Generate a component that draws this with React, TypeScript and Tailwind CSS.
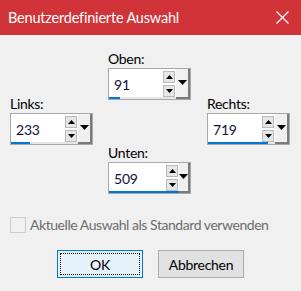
import React from "react";

const font = { fontFamily: 'Lato, "Noto Sans", sans-serif' };

function Tri({ dir, w }: { dir: "up" | "down"; w: number }) {
  const h = Math.ceil(w / 2);
  return (
    <svg width={w} height={h} viewBox={`0 0 ${w} ${h}`}>
      {dir === "up" ? (
        <polygon points={`0,${h} ${w},${h} ${w / 2},0`} fill="#000" />
      ) : (
        <polygon points={`0,0 ${w},0 ${w / 2},${h}`} fill="#000" />
      )}
    </svg>
  );
}

function SpinBox({ value, fill }: { value: string; fill: number }) {
  return (
    <div className="flex h-[32px] w-[83px] border border-[#a8a8a8] bg-white">
      <div className="flex flex-1 flex-col">
        <div className="flex flex-1">
          <div className="flex flex-1 items-center pl-[5px] pt-[2px] text-[14px] tracking-[-0.2px] text-[#101040]">
            {value}
          </div>
          <div className="flex flex-col gap-[2px] pt-[2px] pr-[1px]">
            <div className="flex h-[12px] w-[12px] items-center justify-center border border-[#b9b9b9] bg-[#e6e6e6]">
              <Tri dir="up" w={7} />
            </div>
            <div className="flex h-[12px] w-[12px] items-center justify-center border border-[#b9b9b9] bg-[#e6e6e6]">
              <Tri dir="down" w={7} />
            </div>
          </div>
        </div>
        <div className="h-[3px] bg-[#e6e6e6]">
          <div className="h-full bg-[#0078d7]" style={{ width: fill }} />
        </div>
      </div>
      <div className="flex w-[14px] items-center justify-center border-r-2 border-b-2 border-[#7a7a7a] bg-[#f0f0f0] pb-[2px]">
        <Tri dir="down" w={9} />
      </div>
    </div>
  );
}

function Field({ label, value, fill }: { label: string; value: string; fill: number }) {
  return (
    <div className="flex flex-col">
      <div className="h-[18px] text-[14px] leading-[18px] tracking-[-0.3px] text-black">{label}</div>
      <SpinBox value={value} fill={fill} />
    </div>
  );
}

export default function App() {
  return (
    <div className="flex h-[291px] w-[301px] flex-col bg-[#f0f0f0]" style={font}>
      <div className="flex h-[35px] shrink-0 items-center justify-between bg-[#d13438] pl-[8px] pr-[12px]">
        <span className="text-[14.5px] tracking-[-0.2px] text-white">Benutzerdefinierte Auswahl</span>
        <svg width="13" height="13" viewBox="0 0 13 13">
          <path d="M0.5 0.5 L12.5 12.5 M12.5 0.5 L0.5 12.5" stroke="#fff" strokeWidth="1.2" />
        </svg>
      </div>
      <div className="flex pl-[10px] pt-[15px]">
        <div className="mt-[45px]">
          <Field label="Links:" value="233" fill={19} />
        </div>
        <div className="ml-[15px] flex flex-col gap-[44px]">
          <Field label="Oben:" value="91" fill={11} />
          <Field label="Unten:" value="509" fill={70} />
        </div>
        <div className="ml-[16px] mt-[45px]">
          <Field label="Rechts:" value="719" fill={60} />
        </div>
      </div>
      <div className="mt-[23px] flex h-[16px] items-center pl-[10px]">
        <div className="h-[16px] w-[16px] shrink-0 border border-[#cccccc] bg-[#f0f0f0]" />
        <span className="ml-[4px] whitespace-nowrap text-[14px] leading-[16px] tracking-[-0.45px] text-[#6d6d6d]">
          Aktuelle Auswahl als Standard verwenden
        </span>
      </div>
      <div className="mt-[17px] flex gap-[15px] pl-[57px]">
        <div className="flex h-[28px] w-[86px] items-center justify-center border border-[#0078d7] bg-[#e5f1fb] p-[2px]">
          <div className="flex h-full w-full items-center justify-center border border-dotted border-black text-[14px] tracking-[-0.3px] text-black">
            OK
          </div>
        </div>
        <div className="flex h-[28px] w-[86px] items-center justify-center border border-[#adadad] bg-[#e1e1e1] text-[14px] tracking-[-0.3px] text-black">
          Abbrechen
        </div>
      </div>
    </div>
  );
}
